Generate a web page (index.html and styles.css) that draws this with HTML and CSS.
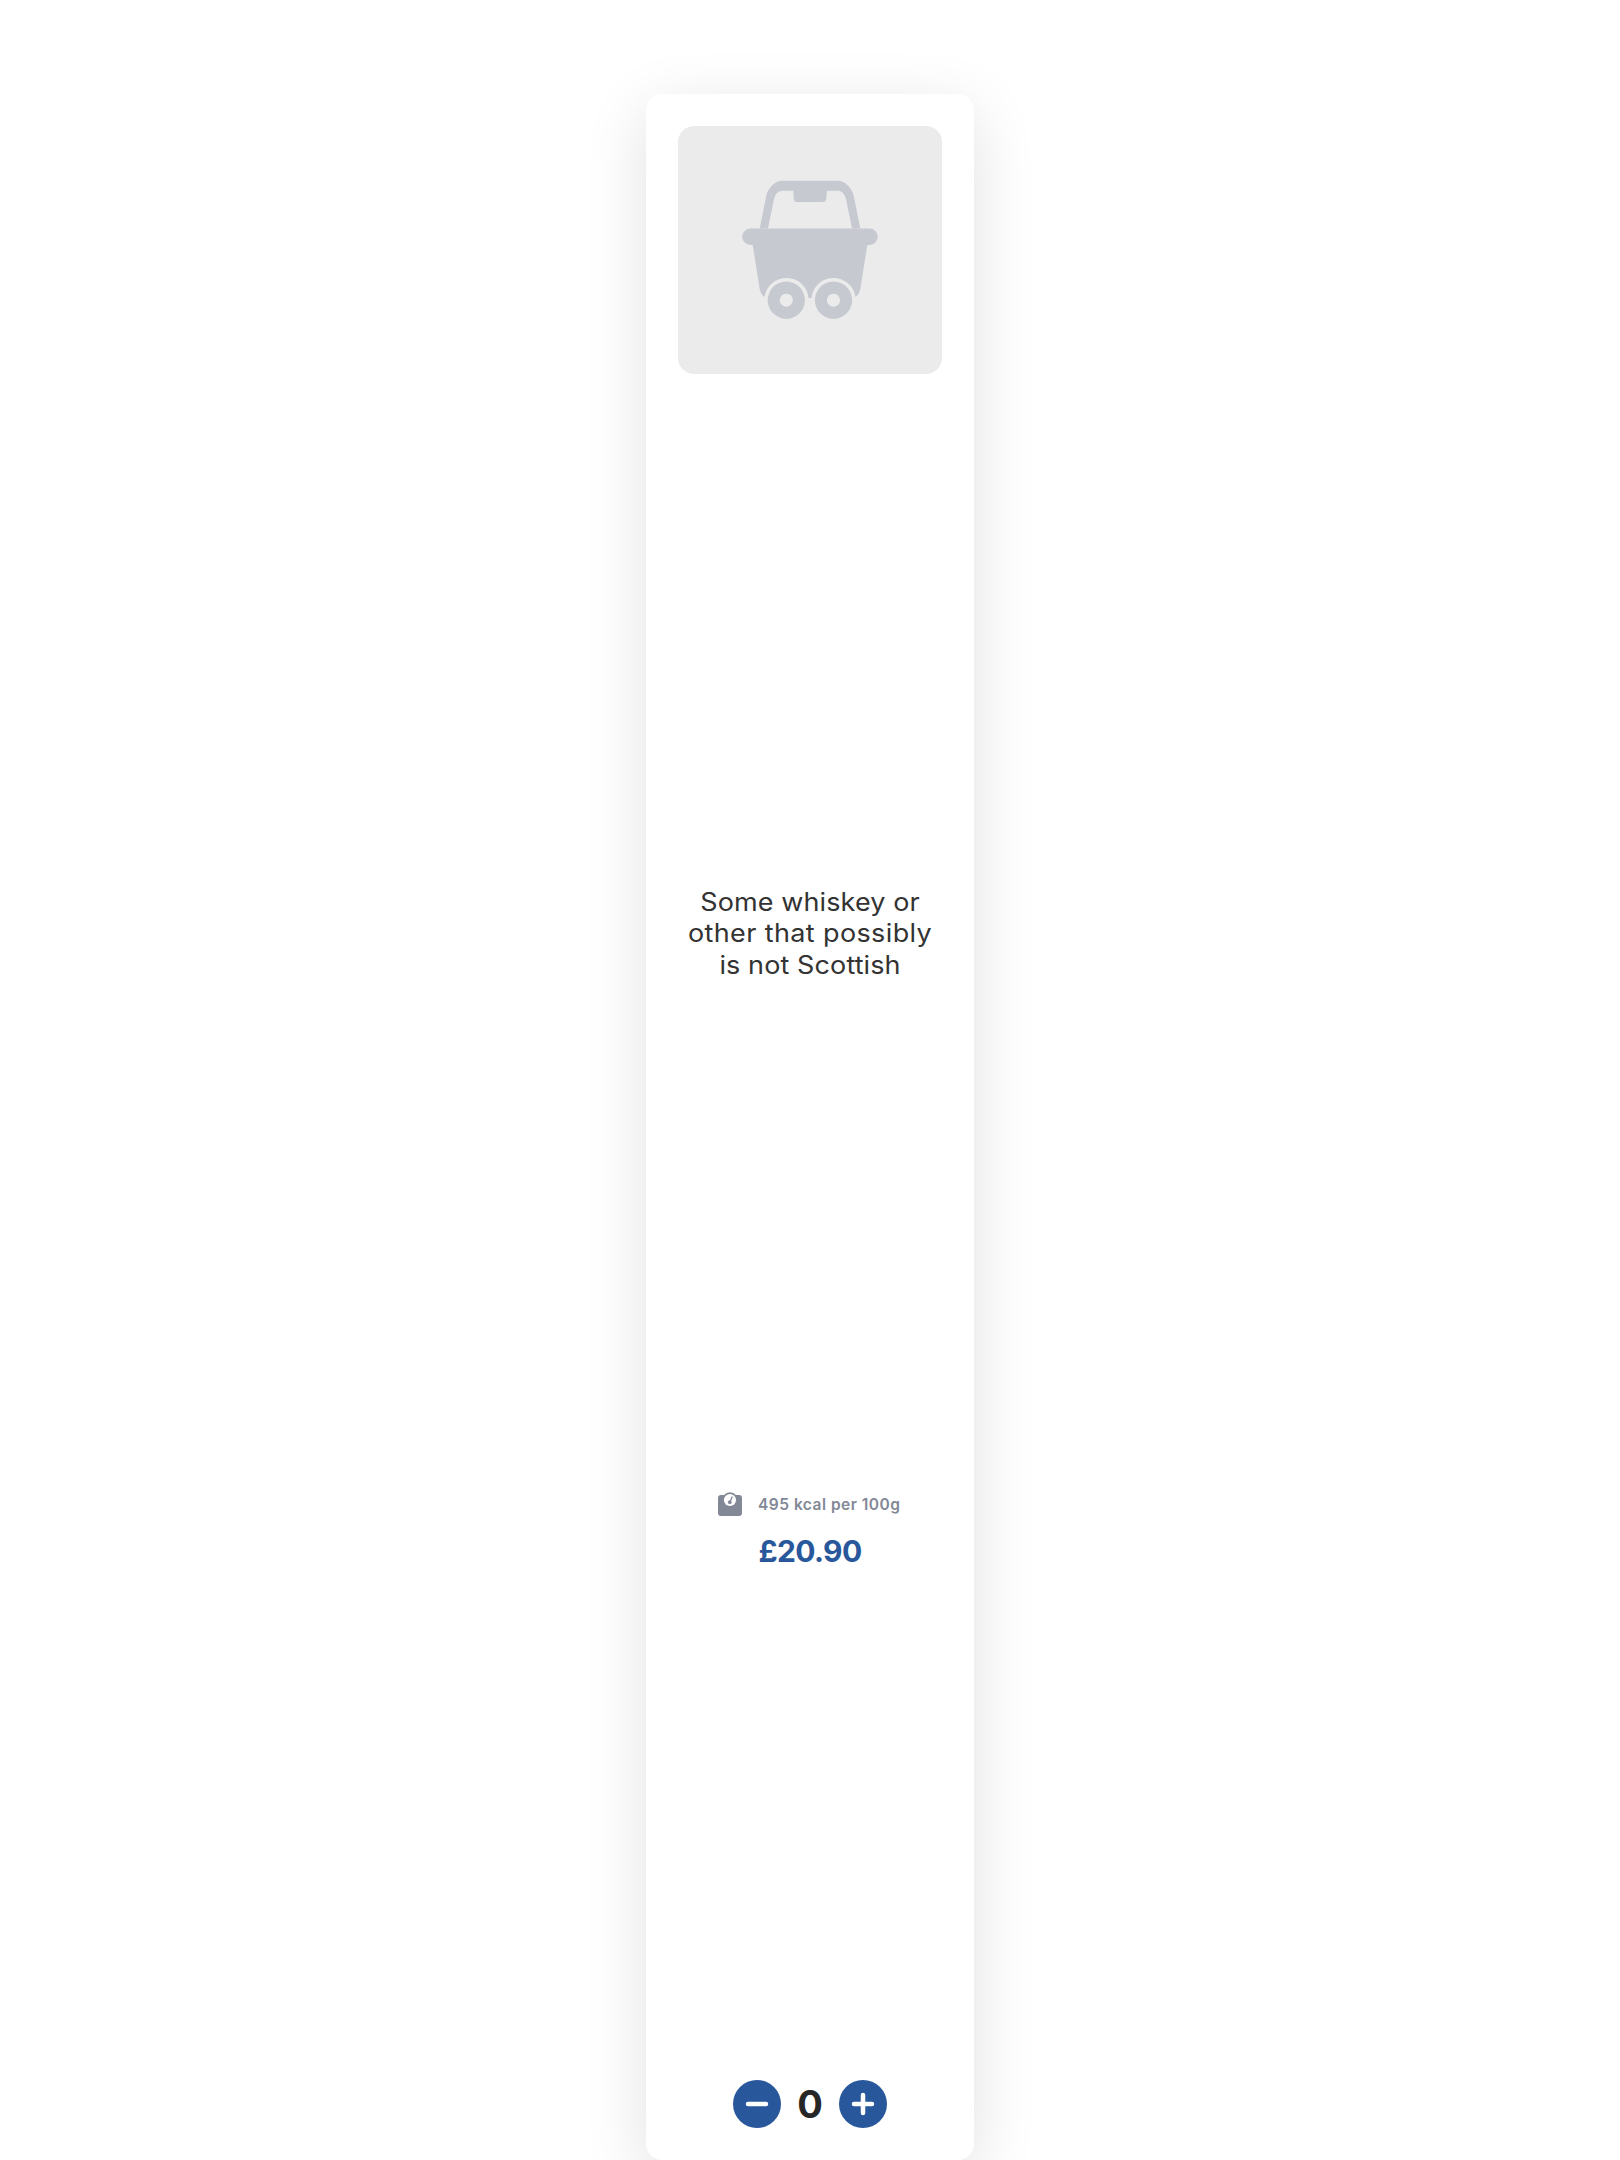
FILE: index.html
```html
<!DOCTYPE html>
<html lang="en">
<head>
<meta charset="utf-8">
<title>Product card</title>
<link rel="stylesheet" href="styles.css">
</head>
<body>
<main class="page">
  <article class="card">
    <div class="card-image">
      <svg class="basket" viewBox="0 0 160 160" aria-hidden="true">
        <path fill-rule="evenodd" d="M29.7 58.5 36.2 26C38.3 17.5 45 10.8 52.5 10.8H107.5C115 10.8 121.7 17.5 123.8 26L130.3 58.5H122L116.2 30C115 24.5 112 20.8 108 20.8H97L96.3 28.5C96.1 31 95 32 93 32H67C65 32 63.9 31 63.7 28.5L63.3 20.8H52C48 20.8 45 24.5 43.8 30L38 58.5Z"/>
        <path d="M20.5 58.5H139.5A8.25 8.25 0 0 1 139.5 75H137.3L130.3 119C129.6 122.5 128 125.5 125.4 127A22 21.5 0 0 0 81.6 128H78.4A22 21.5 0 0 0 34.6 127C32 125.5 30.4 122.5 29.7 119L22.7 75H20.5A8.25 8.25 0 0 1 20.5 58.5Z"/>
        <path fill-rule="evenodd" d="M56.3 111.6a18.6 18.6 0 1 0 .01 0ZM56.3 123.7a6.5 6.5 0 1 1-.01 0ZM103.5 111.6a18.6 18.6 0 1 0 .01 0ZM103.5 123.7a6.5 6.5 0 1 1-.01 0Z"/>
      </svg>
    </div>
    <h1 class="title"><span class="line">Some whiskey or</span> <span class="line line-wide">other that possibly</span> <span class="line">is not Scottish</span></h1>
    <div class="details">
      <div class="energy">
        <svg class="scale" viewBox="0 0 24 24" aria-hidden="true">
          <path fill="#828896" d="M3 3H6A7.8 7.8 0 0 1 18 3H21a3 3 0 0 1 3 3V21a3 3 0 0 1-3 3H3a3 3 0 0 1-3-3V6a3 3 0 0 1 3-3Z"/>
          <circle cx="12" cy="8" r="6.1" fill="#fff"/>
          <path d="M12 10 14 5" stroke="#828896" stroke-width="1.3" stroke-linecap="round"/>
          <circle cx="11.8" cy="10.2" r="1.9" fill="#828896"/>
        </svg>
        <span class="kcal">495 kcal per 100g</span>
      </div>
      <div class="price">£20.90</div>
    </div>
    <div class="stepper">
      <button class="step" aria-label="Remove one"><svg viewBox="0 0 48 48"><path d="M15 24H33"/></svg></button>
      <span class="count">0</span>
      <button class="step" aria-label="Add one"><svg viewBox="0 0 48 48"><path d="M15 24H33M24 15V33"/></svg></button>
    </div>
  </article>
</main>
</body>
</html>
```
FILE: styles.css
```css
* { box-sizing: border-box; }
body { margin: 0; background: #fff; font-family: Inter, "Open Sans", sans-serif; }
.page { height: 2160px; padding-top: 94px; display: flex; justify-content: center; overflow: hidden; }
.card {
  width: 328px; padding: 32px; border-radius: 16px; background: #fff;
  box-shadow: 0 16px 64px rgba(0, 0, 0, .12);
  display: flex; flex-direction: column; justify-content: space-between; align-items: center;
}
.card-image {
  width: 264px; height: 248px; border-radius: 16px; background: #ebebeb;
  display: flex; align-items: center; justify-content: center;
}
.basket { width: 160px; height: 160px; display: block; fill: #c7c9d1; }
.title {
  margin: 0; padding-top: 3.5px; color: #333; font-size: 25px; font-weight: 400; line-height: 31.5px;
  letter-spacing: .1px; white-space: nowrap; text-align: center; transform: scaleX(1.08);
}
.line { display: block; }
.line-wide { letter-spacing: .35px; }
.details { height: 80px; display: flex; flex-direction: column; align-items: center; }
.energy { width: 184px; height: 27px; display: flex; align-items: center; gap: 16px; }
.scale { width: 24px; height: 24px; flex: none; }
.kcal { color: #828896; font-size: 15.5px; font-weight: 600; letter-spacing: .5px; white-space: nowrap; }
.price { margin-top: 14px; color: #28579b; font-size: 30px; font-weight: 700; line-height: 38px; letter-spacing: -.6px; }
.stepper { width: 154px; height: 48px; display: flex; align-items: center; justify-content: space-between; }
.step { width: 48px; height: 48px; padding: 0; border: 0; border-radius: 50%; background: #28579b; }
.step svg { display: block; width: 48px; height: 48px; fill: none; stroke: #fff; stroke-width: 4.5; stroke-linecap: round; }
.count { padding-top: 1px; color: #262626; font-size: 38px; font-weight: 700; line-height: 48px; }
```
